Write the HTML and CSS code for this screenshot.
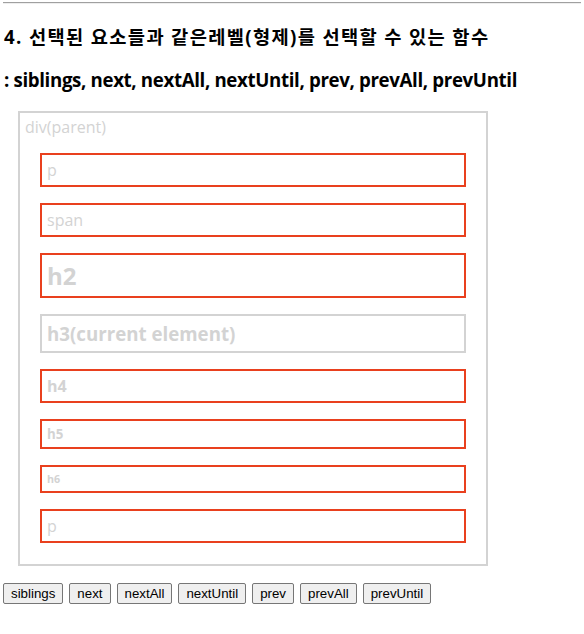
FILE: index.html
```html
<!DOCTYPE html>
<html lang="ko">

<head>
  <meta charset="UTF-8" />
  <meta name="viewport" content="width=device-width, initial-scale=1.0" />
  <title>형제 선택</title>
  <link rel="stylesheet" href="styles.css">
</head>

<body>
  <hr class="line" />
  <h3 class="title ko">4. 선택된 요소들과 같은레벨(형제)를 선택할 수 있는 함수</h3>
  <h3 class="title">: siblings, next, nextAll, nextUntil, prev, prevAll, prevUntil</h3>

  <div class="ancestors">
    <div class="parent">div(parent)
      <p class="item sib">p</p>
      <span class="item sib">span</span>
      <h2 class="item sib">h2</h2>
      <h3 class="item current">h3(current element)</h3>
      <h4 class="item sib">h4</h4>
      <h5 class="item sib">h5</h5>
      <h6 class="item sib">h6</h6>
      <p class="item sib">p</p>
    </div>
  </div>

  <div class="buttons">
    <button>siblings</button>
    <button>next</button>
    <button>nextAll</button>
    <button>nextUntil</button>
    <button>prev</button>
    <button>prevAll</button>
    <button>prevUntil</button>
  </div>
</body>

</html>
```

FILE: styles.css
```css
* {
  box-sizing: border-box;
}

body {
  margin: 0 3px;
  font-family: "Open Sans", "Noto Sans CJK KR", sans-serif;
  font-size: 16px;
}

.line {
  margin: 2px -3px 0;
  border: none;
  border-top: 1px solid #a0a0a0;
  border-bottom: 1px solid #eeeeee;
}

.title {
  margin: 0 0 0 1px;
  font-size: 18.7px;
  font-weight: bold;
  letter-spacing: -0.35px;
  line-height: 43px;
}

.title.ko {
  margin-top: 11px;
  letter-spacing: 1.35px;
}

.ancestors {
  padding-top: 10px;
}

.parent {
  width: 470px;
  margin-left: 15px;
  padding: 5px;
  border: 2px solid lightgrey;
  color: lightgrey;
  line-height: 19px;
}

.item {
  display: block;
  margin: 16px 15px;
  padding: 5px;
  border: 2px solid lightgrey;
  color: lightgrey;
}

.sib {
  border-color: #e9401e;
}

p.item,
span.item {
  font-size: 16px;
  line-height: 20px;
}

h2.item {
  font-size: 24px;
  line-height: 31px;
}

h3.item {
  font-size: 18.7px;
  line-height: 25px;
}

h4.item {
  font-size: 16px;
  line-height: 20px;
}

h5.item {
  font-size: 13.3px;
  line-height: 16px;
}

h6.item {
  font-size: 10.7px;
  line-height: 14px;
}

.buttons {
  display: flex;
  gap: 6px;
  margin-top: 17px;
}

button {
  font-family: "Liberation Sans", Arial, sans-serif;
  font-size: 13.3px;
  height: 21px;
  padding: 1px 7px;
  border: 1px solid #767676;
  border-radius: 2px;
  background-color: #efefef;
  color: black;
}
```
